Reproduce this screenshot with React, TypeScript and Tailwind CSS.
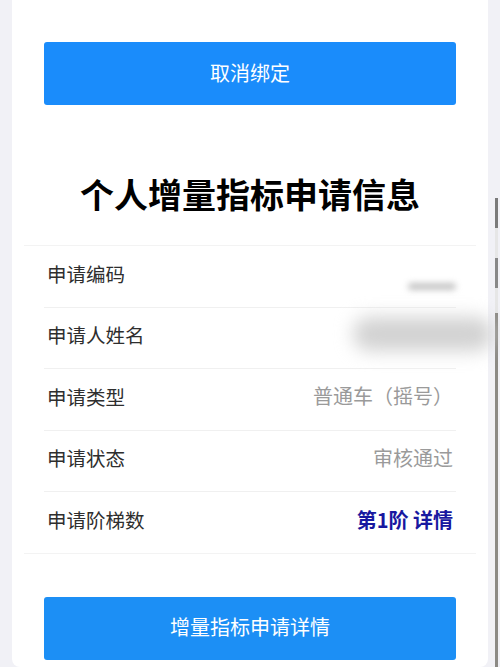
const rows = [
    { label: "申请编码", kind: "blur1" },
    { label: "申请人姓名", kind: "blur2" },
    { label: "申请类型", kind: "text", value: "普通车（摇号）" },
    { label: "申请状态", kind: "text", value: "审核通过" },
    { label: "申请阶梯数", kind: "link", value: "第1阶 详情" },
];

export default function App() {
    return (
        <div
            className="flex min-h-[667px] w-[500px] bg-[#f1f1f6] overflow-hidden"
            style={{ fontFamily: '"Noto Sans CJK SC", "Noto Sans", sans-serif' }}
        >
            <div className="w-[12px] shrink-0" />

            {/* Card */}
            <div className="flex-1 bg-white rounded-b-lg flex flex-col pt-[42px]">
                <div className="px-[32px]">
                    <button className="w-full h-[63px] bg-[#1a8cfb] rounded-[3px] text-white text-[20px] flex items-center justify-center pb-[2px]">
                        取消绑定
                    </button>
                </div>

                <h1 className="mt-[69px] text-center text-[34px] leading-[40px] font-bold text-black">
                    个人增量指标申请信息
                </h1>

                <div className="mt-[31px] flex flex-col">
                    {rows.map((row, i) => (
                        <div
                            key={row.label}
                            className={
                                i === 0
                                    ? "h-[61.6px] mx-[12px] px-[23px] pb-[6px] border-t border-[#f3f3f3] flex items-center justify-between"
                                    : "h-[61.6px] mx-[32px] px-[3px] pb-[6px] border-t border-[#f0f0f0] flex items-center justify-between"
                            }
                        >
                            <span className="text-[19.5px] text-[#2e2e2e]">{row.label}</span>
                            {row.kind === "blur1" && (
                                <span className="block w-[48px] h-[7px] mt-[26px] mr-[-3px] bg-[#c4c4c4] rounded-full blur-[3px]" />
                            )}
                            {row.kind === "blur2" && (
                                <span className="block w-[140px] h-[34px] mt-[-2px] mr-[-40px] bg-[#d2d2d2] rounded-full blur-[9px]" />
                            )}
                            {row.kind === "text" && (
                                <span className="text-[20px] text-[#9a9a9a]">{row.value}</span>
                            )}
                            {row.kind === "link" && (
                                <span className="text-[20px] font-bold text-[#1818a0]">{row.value}</span>
                            )}
                        </div>
                    ))}
                    <div className="mx-[12px] border-t border-[#f3f3f3]" />
                </div>

                <div className="px-[32px] mt-[43px] pb-[7px]">
                    <button className="w-full h-[63px] bg-[#1c8ff5] rounded-[3px] text-white text-[20px] flex items-center justify-center pb-[2px]">
                        增量指标申请详情
                    </button>
                </div>
            </div>

            {/* right gutter with scroll indicator */}
            <div className="w-[12px] shrink-0 flex flex-col items-center pt-[198px] pl-[4px]">
                <div className="w-[3px] h-[30px] bg-[#7a7a7a]" />
                <div className="w-[3px] h-[30px] bg-[#e6e6e6]" />
                <div className="w-[3px] h-[30px] bg-[#888]" />
                <div className="w-[3px] h-[25px] bg-[#e6e6e6]" />
                <div className="w-[3px] flex-1 bg-[#8c8a85]" />
            </div>
        </div>
    );
}
